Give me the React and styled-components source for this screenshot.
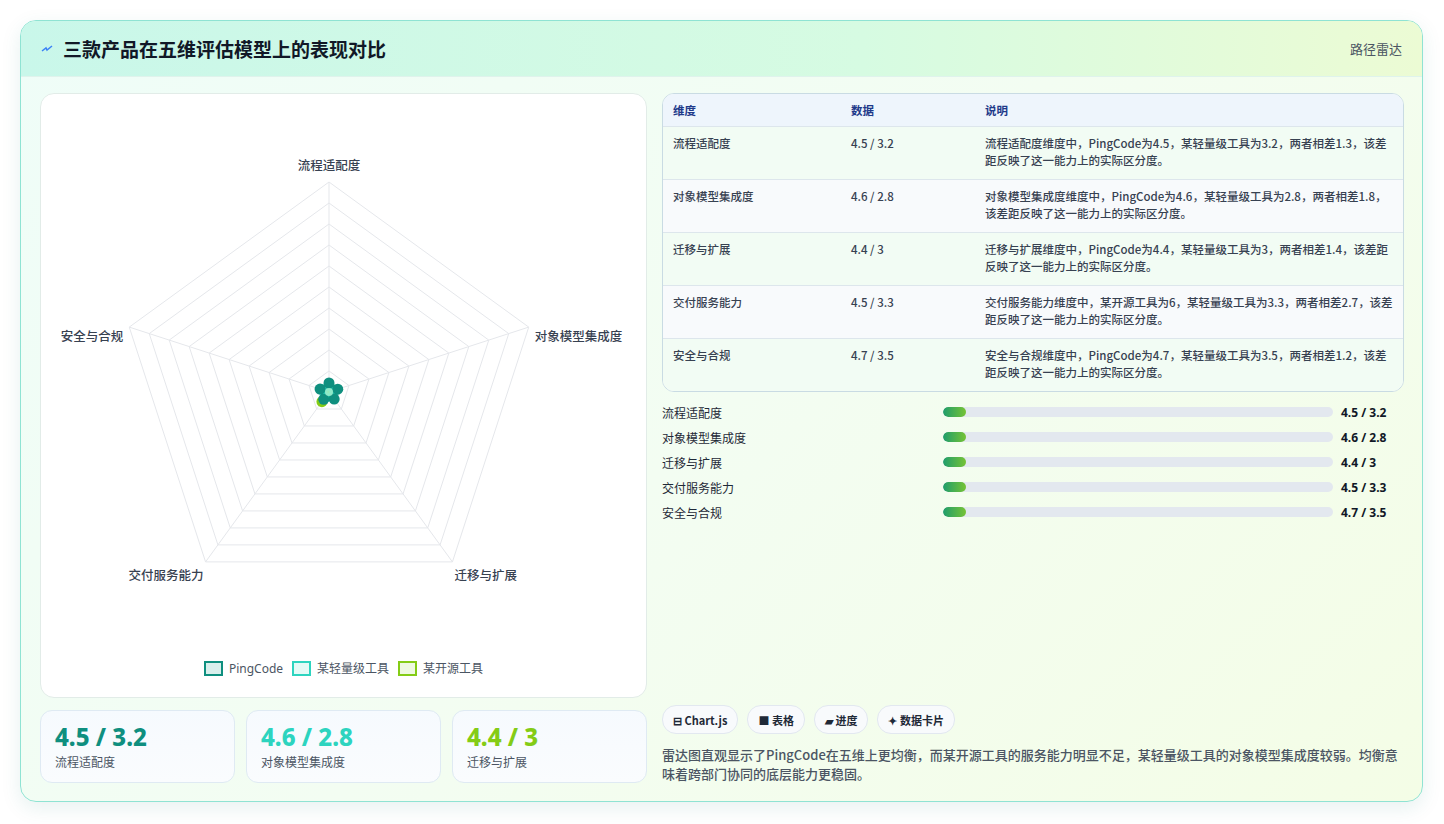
import React from "react";
import styled, { createGlobalStyle } from "styled-components";

const Global = createGlobalStyle`
  html,body{margin:0;padding:0;background:#fff;}
  body{font-family:"Noto Sans CJK SC","Noto Sans",sans-serif;color:#1f2937;}
`;

const Page = styled.div`
  width:1444px;height:824px;box-sizing:border-box;padding:20px 21px 22px 20px;
`;
const Card = styled.div`
  height:100%;box-sizing:border-box;border:1px solid #8fe3d3;border-radius:16px;overflow:hidden;
  display:flex;flex-direction:column;
  background:linear-gradient(135deg,#effdf8 0%,#f3fdf2 50%,#f4fde6 100%);
  box-shadow:0 6px 20px rgba(15,118,110,0.10);
`;
const Header = styled.div`
  height:55px;flex:none;display:flex;align-items:center;justify-content:space-between;
  padding:0 20px 0 20px;border-bottom:1px solid #dff3ec;
  background:linear-gradient(90deg,#c9f7ea 0%,#d6fbe2 60%,#ecfbd4 100%);
`;
const Title = styled.h1`
  margin:0;font-size:19px;font-weight:700;color:#111827;display:flex;align-items:center;gap:10px;
`;
const Tag = styled.span`font-size:13px;color:#4b5563;`;
const Body = styled.div`
  flex:1;display:grid;grid-template-columns:607px 1fr;gap:15px;padding:16px 18px 18px 19px;min-height:0;
`;
const Left = styled.div`display:flex;flex-direction:column;gap:12px;min-height:0;`;
const ChartBox = styled.div`
  flex:1;background:#fff;border:1px solid #e2ece8;border-radius:14px;position:relative;
`;
const Legend = styled.div`
  position:absolute;left:0;right:0;bottom:20px;display:flex;justify-content:center;gap:9px;
  font-size:12px;color:#4b5563;font-family:"Noto Sans","Noto Sans CJK SC",sans-serif;
`;
const LegItem = styled.span`display:flex;align-items:center;gap:6px;`;
const Swatch = styled.span`
  width:15px;height:11px;border:2.5px solid ${p=>p.c};background:${p=>p.bg};
`;
const Stats = styled.div`display:grid;grid-template-columns:repeat(3,1fr);gap:11px;height:73px;flex:none;`;
const Stat = styled.div`
  background:linear-gradient(180deg,#f6fafe,#fafcfe);border:1px solid #dfeaf3;border-radius:12px;
  padding:10px 14px;display:flex;flex-direction:column;justify-content:center;
`;
const StatVal = styled.div`
  font-family:"Noto Sans",sans-serif;font-weight:800;font-size:24px;line-height:28px;color:${p=>p.c};
`;
const StatLab = styled.div`font-size:12px;color:#4b5563;margin-top:2px;`;
const Right = styled.div`display:flex;flex-direction:column;min-height:0;`;
const Table = styled.div`
  border:1px solid #c9dbe3;border-radius:12px;overflow:hidden;background:#fff;
`;
const Row = styled.div`
  display:grid;grid-template-columns:178px 134px 1fr;padding:0 10px;
  min-height:${p=>p.head?"32px":"53px"};box-sizing:border-box;align-items:${p=>p.head?"center":"start"};
  padding-top:${p=>p.head?"0":"8px"};
  background:${p=>p.head?"#eef5fc":p.alt?"#f8fafc":"#f2fcf4"};
  border-top:${p=>p.first?"none":"1px solid #dde6ec"};
  font-size:11.5px;line-height:17px;color:${p=>p.head?"#1e3a8a":"#374151"};
  font-weight:${p=>p.head?700:500};
`;
const Bars = styled.div`display:flex;flex-direction:column;gap:7px;margin-top:11px;`;
const BarRow = styled.div`
  display:grid;grid-template-columns:281px 390px 1fr;align-items:center;height:18px;font-size:12px;color:#1f2937;
`;
const Track = styled.div`height:10px;border-radius:5px;background:#e3e8ef;overflow:hidden;`;
const Fill = styled.div`height:100%;border-radius:5px;background:linear-gradient(90deg,#1f9d6c,#76c335);`;
const BarVal = styled.span`padding-left:8px;font-weight:700;font-size:12px;font-family:"Noto Sans",sans-serif;color:#111827;`;
const Spacer = styled.div`flex:1;`;
const Chips = styled.div`display:flex;gap:9px;margin-bottom:11px;`;
const Chip = styled.span`
  border:1px solid #e2e8f0;background:#f8fafc;border-radius:14px;padding:0 10px;height:27px;
  display:flex;align-items:center;gap:4px;font-size:11px;font-weight:600;color:#1f2937;
`;
const Desc = styled.p`margin:0;font-size:13px;line-height:19px;color:#4b5563;font-weight:500;`;

const dims=["流程适配度","对象模型集成度","迁移与扩展","交付服务能力","安全与合规"];
const vals=["4.5 / 3.2","4.6 / 2.8","4.4 / 3","4.5 / 3.3","4.7 / 3.5"];
const descs=[
"流程适配度维度中，PingCode为4.5，某轻量级工具为3.2，两者相差1.3，该差距反映了这一能力上的实际区分度。",
"对象模型集成度维度中，PingCode为4.6，某轻量级工具为2.8，两者相差1.8，该差距反映了这一能力上的实际区分度。",
"迁移与扩展维度中，PingCode为4.4，某轻量级工具为3，两者相差1.4，该差距反映了这一能力上的实际区分度。",
"交付服务能力维度中，某开源工具为6，某轻量级工具为3.3，两者相差2.7，该差距反映了这一能力上的实际区分度。",
"安全与合规维度中，PingCode为4.7，某轻量级工具为3.5，两者相差1.2，该差距反映了这一能力上的实际区分度。"];

function pt(cx,cy,r,i){const a=-Math.PI/2+i*2*Math.PI/5;return [cx+r*Math.cos(a),cy+r*Math.sin(a)];}
function Radar(){
  const cx=288,cy=298,R=210;
  const rings=[];
  for(let k=1;k<=10;k++){rings.push(<polygon key={k} points={[0,1,2,3,4].map(i=>pt(cx,cy,R*k/10,i).join(",")).join(" ")} fill="none" stroke="#e5e7eb" strokeWidth="1"/>);}
  const series=[
    {r:[9,9.2,8.8,9,9.4],c:"#0f8f7f",f:"rgba(15,143,127,0.25)"},
    {r:[6.4,5.6,6,6.6,7],c:"#2dd4bf",f:"rgba(45,212,191,0.2)"},
    {r:[5,6,4.6,12,5.4],c:"#84cc16",f:"rgba(132,204,22,0.2)"},
  ];
  const labels=[["流程适配度",cx,cy-R-12,"middle"],["对象模型集成度",cx+R*0.951+6,cy-R*0.309+14,"start"],["迁移与扩展",cx+R*0.588+2,cy+R*0.809+18,"start"],["交付服务能力",cx-R*0.588-2,cy+R*0.809+18,"end"],["安全与合规",cx-R*0.951-6,cy-R*0.309+14,"end"]];
  return (
    <svg width="607" height="560" style={{position:"absolute",left:0,top:0}}>
      {rings}
      {[0,1,2,3,4].map(i=>{const [x,y]=pt(cx,cy,R,i);return <line key={i} x1={cx} y1={cy} x2={x} y2={y} stroke="#e5e7eb"/>;})}
      {labels.map(([t,x,y,a])=><text key={t} x={x} y={y} textAnchor={a} fontSize="12.5" fontWeight="500" fill="#374151" fontFamily="Noto Sans CJK SC, sans-serif">{t}</text>)}
      {series.slice().reverse().map((s,j)=>(
        <g key={j}>
          <polygon points={s.r.map((r,i)=>pt(cx,cy,r,i).join(",")).join(" ")} fill={s.f} stroke={s.c} strokeWidth="2"/>
          {s.r.map((r,i)=>{const [x,y]=pt(cx,cy,r,i);return <circle key={i} cx={x} cy={y} r="5.5" fill={s.c}/>;})}
        </g>
      ))}
      <circle cx={cx} cy={cy} r="4" fill="#a7f3d0" opacity="0.8"/>
    </svg>
  );
}

export default function App(){
  return (<>
    <Global/>
    <Page><Card>
      <Header>
        <Title><svg width="12" height="10" viewBox="0 0 12 10"><path d="M1 7 L5 4 L6 6 L11 2" stroke="#3b82f6" strokeWidth="1.5" fill="none"/></svg>三款产品在五维评估模型上的表现对比</Title>
        <Tag>路径雷达</Tag>
      </Header>
      <Body>
        <Left>
          <ChartBox>
            <Radar/>
            <Legend>
              <LegItem><Swatch c="#0f8f7f" bg="#d9efec"/>PingCode</LegItem>
              <LegItem><Swatch c="#2dd4bf" bg="#e3faf6"/>某轻量级工具</LegItem>
              <LegItem><Swatch c="#84cc16" bg="#eef9e0"/>某开源工具</LegItem>
            </Legend>
          </ChartBox>
          <Stats>
            <Stat><StatVal c="#0f8f7f">4.5 / 3.2</StatVal><StatLab>流程适配度</StatLab></Stat>
            <Stat><StatVal c="#2dd4bf">4.6 / 2.8</StatVal><StatLab>对象模型集成度</StatLab></Stat>
            <Stat><StatVal c="#84cc16">4.4 / 3</StatVal><StatLab>迁移与扩展</StatLab></Stat>
          </Stats>
        </Left>
        <Right>
          <Table>
            <Row head first><span>维度</span><span>数据</span><span>说明</span></Row>
            {dims.map((d,i)=>(
              <Row key={d} alt={i%2===1}><span>{d}</span><span>{vals[i]}</span><span>{descs[i]}</span></Row>
            ))}
          </Table>
          <Bars>
            {dims.map((d,i)=>(
              <BarRow key={d}><span>{d}</span><Track><Fill style={{width:"6%"}}/></Track><BarVal>{vals[i]}</BarVal></BarRow>
            ))}
          </Bars>
          <Spacer/>
          <Chips>
            <Chip>⊟ Chart.js</Chip><Chip>■ 表格</Chip><Chip>▰ 进度</Chip><Chip>✦ 数据卡片</Chip>
          </Chips>
          <Desc>雷达图直观显示了PingCode在五维上更均衡，而某开源工具的服务能力明显不足，某轻量级工具的对象模型集成度较弱。均衡意味着跨部门协同的底层能力更稳固。</Desc>
        </Right>
      </Body>
    </Card></Page>
  </>);
}
